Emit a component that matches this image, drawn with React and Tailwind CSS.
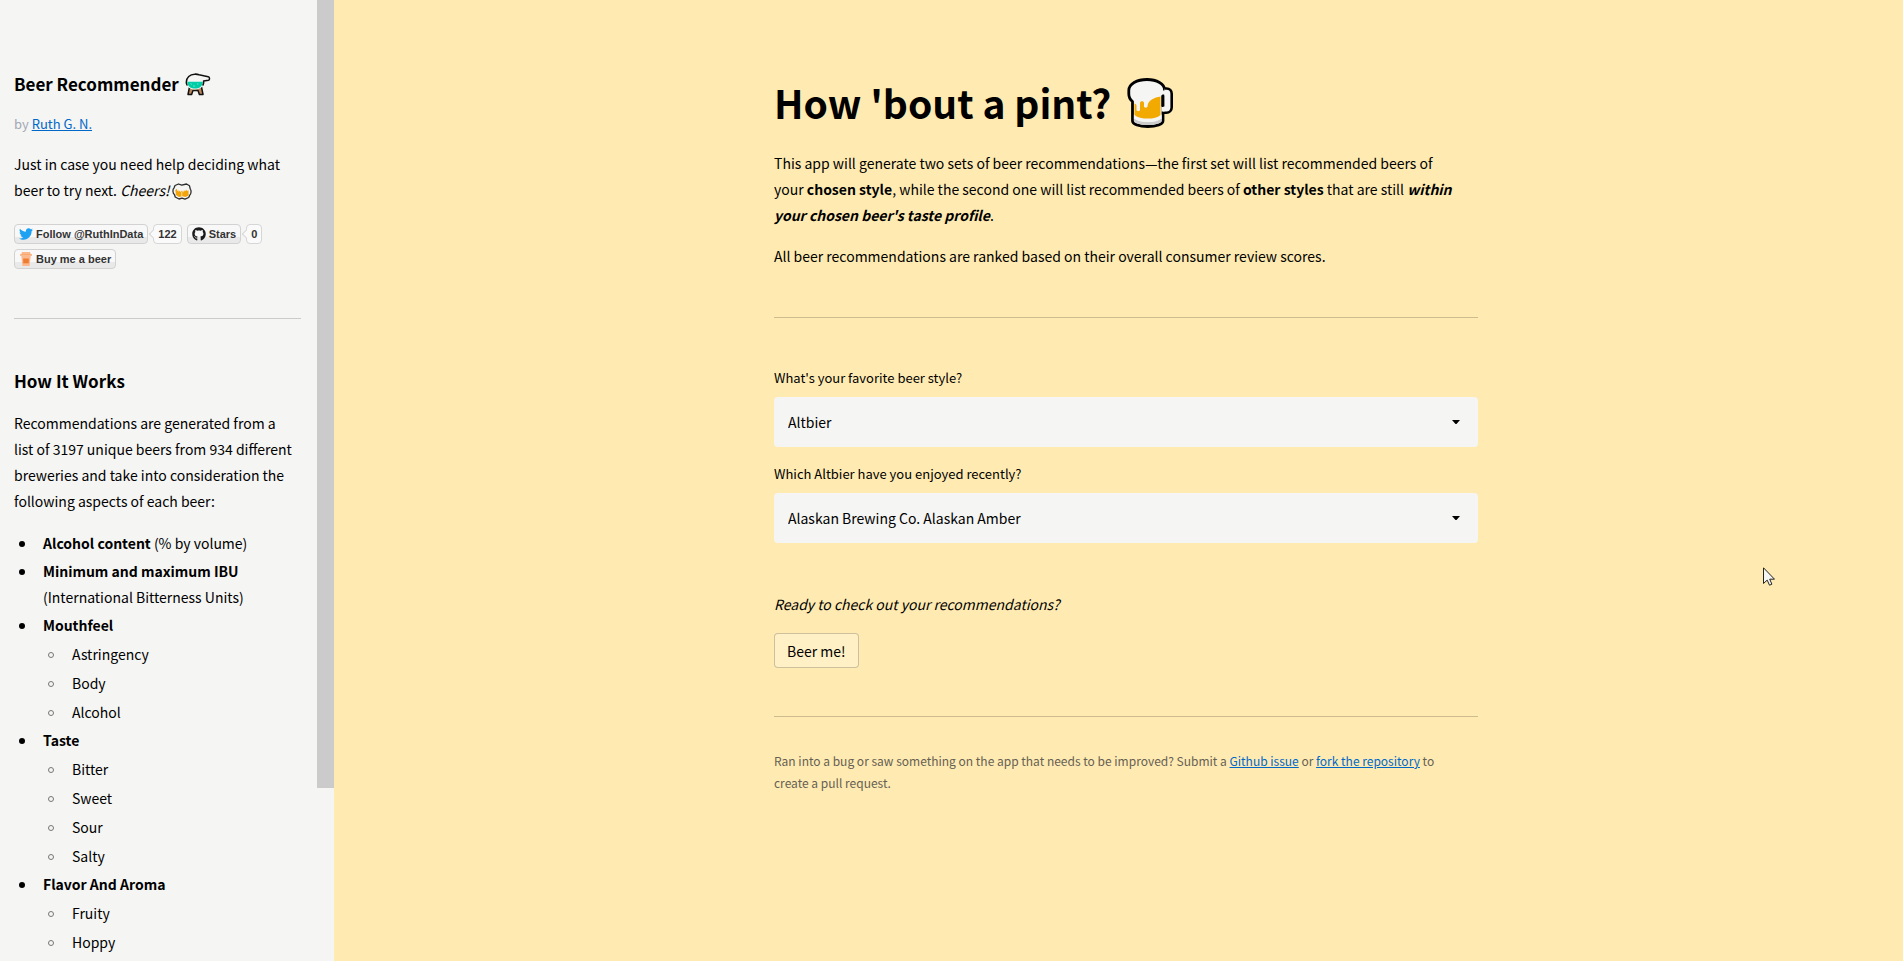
import { FaTwitter, FaGithub } from "react-icons/fa";

const groups = [
  { title: "Alcohol content", note: "(% by volume)" },
  { title: "Minimum and maximum IBU", note: "(International Bitterness Units)" },
  { title: "Mouthfeel", items: ["Astringency", "Body", "Alcohol"] },
  { title: "Taste", items: ["Bitter", "Sweet", "Sour", "Salty"] },
  { title: "Flavor And Aroma", items: ["Fruity", "Hoppy"] },
];

function Alembic() {
  return (
    <svg viewBox="0 0 26 23" className="h-[23px] w-[26px] shrink-0" aria-hidden="true">
      <path d="M4.500 14 3 21.500h3.600L8 17.500h5l1.400 4H18L16.500 14z" fill="#b98559" stroke="#111" strokeWidth="1.5" strokeLinejoin="round" />
      <path d="M9.500 1.200C11 1 12.500 1.200 14 1.800l9.200 2c1.700.4 1.800 3.200.2 3.500L18.600 8c.8 4.500-2.400 8.500-8.600 8.500-5.500 0-8.700-3-8.700-7.300C1.300 4.500 5 1.400 9.500 1.200z" fill="#f5f5f4" />
      <path d="M2.300 8.800h15.500c0 3.800-2.600 6.800-7.800 6.800S2.300 12.600 2.300 8.800z" fill="#00cca5" />
      <path d="M2 12C1.500 11 1.300 10.200 1.300 9.200 1.300 4.500 5 1.400 9.500 1.200 11 1 12.500 1.200 14 1.800l9.200 2c1.700.4 1.800 3.200.2 3.500L18.600 8c.3 1.500 0 3-.6 4" fill="none" stroke="#111" strokeWidth="1.500" strokeLinecap="round" strokeLinejoin="round" />
      <path d="M5.500 10.500 7 11.500M8 13h2M12 11h1.500" stroke="#7be8d2" strokeWidth=".8" />
    </svg>
  );
}

function Mugs() {
  return (
    <svg viewBox="0 0 20 17" className="ml-[2px] inline-block h-[17px] w-[20px] align-[-4px]" aria-hidden="true">
      <path d="M3 2.500 6.500 1l3.200 1.200L14.500 1l3 1.800.8 3.400c1.200.8 1 4.800-.6 6l-1 2.300-3.700 1.700-3-1-3 .8L3.200 14 2.500 11.500C.5 10.500.5 6 2 5z" fill="#f5f5f4" stroke="#2b2b2b" strokeWidth="1.300" strokeLinejoin="round" />
      <path d="M3.300 7 5 5.800V8l1.500-1v2L8 7.500V9l2-1.500 1.200 2 .8-2.500 1 1.500 1.200-2 .8 1.500 1.500-.8.200 5.300-3.200 1.500-3-.7-3.500.7L4 12z" fill="#f0a30a" />
      <path d="M9.800 8.500v5" stroke="#fff" strokeWidth=".6" />
    </svg>
  );
}

function Mug() {
  return (
    <svg viewBox="0 0 46 50" className="h-[50px] w-[46px] shrink-0" aria-hidden="true">
      <path d="M1.800 12.500C1.800 6 10 1.500 20 1.500S37.500 6 37.500 11.500v4L36 18v25c0 3-6.500 5.500-15.200 5.500S5.500 46 5.500 43V23.500C3 21.500 1.800 19 1.800 16z" fill="#f5f5f4" stroke="#000" strokeWidth="2.800" strokeLinejoin="round" />
      <path d="M6.900 40c3 2.800 8 4 14 4s10.900-1.200 13.800-4v3c0 2-6 4.100-13.800 4.100S6.900 45 6.900 43z" fill="#ccc" />
      <path d="M6.900 36.500c3 2.500 8 3.500 14 3.500s10.800-1 13.800-3.500V40.500c-3 2.500-8 3.500-13.800 3.500S9.900 43 6.900 40.500z" fill="#f5f5f4" />
      <path d="M7.500 25.500c1 .4 1.800 1 2 2V32c0 1.500 3.500 1.500 3.500 0v-7c0-2.500 4-2.500 4 0v3.500c0 1.500 3.500 1.500 3.500 0 .3-6.500 7-9 13-10V37c-3 2.600-7 3.600-12.500 3.600S10.500 39.600 7.500 37z" fill="#f2a900" />
      <path d="M37.500 10.500h2c3 0 5.200 2.200 5.200 5.200v13.500c0 3.200-2.200 5.500-5.400 5.500H36" fill="#f5f5f4" stroke="#000" strokeWidth="2.600" />
      <path d="M34.500 12.500h4v4h-4zM34.500 29h3v4.400h-3z" fill="#f5f5f4" />
      <path d="M34.400 17.500h3v11h-3z" fill="#000" />
    </svg>
  );
}

function BeerCup() {
  return (
    <svg viewBox="0 0 12 14" className="h-[14px] w-[12px]" aria-hidden="true">
      <path d="M2 0h8l.6 2.200H12v1.500H0V2.200h1.400z" fill="#f9a870" />
      <path d="M1.300 3.700h9.400L9.600 14H2.400z" fill="#fbb98d" />
      <path d="M3.200 6.500h5.600v4.800H3.200z" fill="#ee7d31" />
      <path d="M2.200 1h7.600" stroke="#fcd3b8" strokeWidth=".8" />
    </svg>
  );
}

const badge =
  "flex h-5 items-center gap-[3px] rounded-sm border border-[#d2d2d2] bg-linear-to-b from-[#f8f8f8] from-65% to-[#e9e9e9] to-65% px-1 hover:border-[#999]";

function Count({ children }) {
  return (
    <a href="#count" className="relative flex h-5 items-center rounded-sm border border-[#d6d6d6] bg-[#fafafa] px-1">
      <span className="absolute top-[6px] -left-[4px] size-[6px] rotate-45 border-b border-l border-[#d6d6d6] bg-[#fafafa]" />
      {children}
    </a>
  );
}

function Field({ id, label, value, options }) {
  return (
    <div>
      <label htmlFor={id} className="block text-[13px] leading-[22px]">
        {label}
      </label>
      <div className="relative mt-2">
        <select id={id} defaultValue={value} className="block h-[50px] w-full appearance-none rounded bg-[#f5f5f3] px-[14px] text-[14px] outline-none">
          {options.map((o) => (
            <option key={o}>{o}</option>
          ))}
        </select>
        <svg viewBox="0 0 8 4" className="pointer-events-none absolute top-[23px] right-[18px] h-[4px] w-[8px]" aria-hidden="true">
          <path d="M0 0h8L4.500 4h-1z" fill="#000" />
        </svg>
      </div>
    </div>
  );
}

const link = "text-[#0068c9] underline";

export default function App() {
  return (
    <div className="flex h-screen overflow-hidden bg-[#ffebb2] font-['Noto_Sans_CJK_SC','Noto_Sans',sans-serif] text-[14px] leading-[26px] text-black">
      <aside className="flex w-[334px] shrink-0 bg-[#f5f5f3]">
        <div className="min-w-0 flex-1 overflow-hidden pt-[70px] pr-4 pl-[14px]">
          <h2 className="flex items-center gap-[6px] text-[17px] leading-7 font-semibold">
            Beer Recommender <Alembic />
          </h2>
          <p className="mt-[15px] text-[13px] leading-[22px] text-[#a3a8b4]">
            by <a href="#author" className={link}>Ruth G. N.</a>
          </p>
          <p className="mt-4">
            Just in case you need help deciding what
            <br />
            beer to try next. <em>Cheers!</em>
            <Mugs />
          </p>
          <div className="mt-[21px] flex flex-wrap gap-[5px] font-['Liberation_Sans',Arial,sans-serif] text-[11px] leading-[14px] font-bold text-[#333]">
            <a href="#follow" className={badge}>
              <FaTwitter className="size-[14px] text-[#1da1f2]" /> Follow @RuthInData
            </a>
            <Count>122</Count>
            <a href="#stars" className={badge}>
              <FaGithub className="size-[14px] text-[#1b1b1b]" /> Stars
            </a>
            <Count>0</Count>
            <a href="#beer" className={badge}>
              <span className="flex w-[14px] justify-center"><BeerCup /></span> Buy me a beer
            </a>
          </div>
          <hr className="mt-[49px] border-[#cbcbc9]" />
          <h2 className="mt-[48px] text-[17px] leading-7 font-semibold">How It Works</h2>
          <p className="mt-[15px]">
            Recommendations are generated from a
            <br />
            list of 3197 unique beers from 934 different
            <br />
            breweries and take into consideration the
            <br />
            following aspects of each beer:
          </p>
          <ul className="mt-4 flex flex-col gap-[2px]">
            {groups.map((g) => (
              <li key={g.title} className="relative pl-[29px]">
                <span className="absolute top-[11px] left-[5px] size-[6px] rounded-full bg-black" />
                <strong>{g.title}</strong> {g.note}
                {g.items && (
                  <ul>
                    {g.items.map((i) => (
                      <li key={i} className="relative pt-[3px] pl-[29px]">
                        <span className="absolute top-[14px] left-[5px] size-[6px] rounded-full border border-[#777]" />
                        {i}
                      </li>
                    ))}
                  </ul>
                )}
              </li>
            ))}
          </ul>
        </div>
        <div className="w-[17px] shrink-0">
          <div className="h-[82%] bg-[#cbcbcb]" />
        </div>
      </aside>

      <main className="flex-1 overflow-hidden pt-[76px] pl-[15px]">
        <div className="mx-auto max-w-[704px]">
          <h1 className="flex items-center gap-4 text-[39px] leading-[53px] font-bold">
            How 'bout a pint? <Mug />
          </h1>
          <p className="mt-[21px]">
            This app will generate two sets of beer recommendations—the first set will list recommended beers of
            <br />
            your <strong>chosen style</strong>, while the second one will list recommended beers of <strong>other styles</strong> that are still{" "}
            <strong className="italic">
              within
              <br />
              your chosen beer's taste profile
            </strong>
            .
          </p>
          <p className="mt-[15px]">All beer recommendations are ranked based on their overall consumer review scores.</p>
          <hr className="mt-[48px] border-black/20" />
          <div className="mt-[49px] flex flex-col gap-4">
            <Field id="style" label="What's your favorite beer style?" value="Altbier" options={["Altbier", "Barleywine", "Bitter", "Bock"]} />
            <Field
              id="beer"
              label="Which Altbier have you enjoyed recently?"
              value="Alaskan Brewing Co. Alaskan Amber"
              options={["Alaskan Brewing Co. Alaskan Amber", "Ninkasi Brewing Company Sleigh'r"]}
            />
          </div>
          <p className="mt-[48px] italic">Ready to check out your recommendations?</p>
          <button type="button" className="mt-4 block h-[35px] rounded border border-black/20 bg-[#fff0c5] px-3">
            Beer me!
          </button>
          <hr className="mt-[48px] border-black/20" />
          <p className="mt-[33px] text-[12px] leading-[22px] text-[#666052]">
            Ran into a bug or saw something on the app that needs to be improved? Submit a{" "}
            <a href="#issue" className={link}>Github issue</a> or <a href="#fork" className={link}>fork the repository</a> to
            <br />
            create a pull request.
          </p>
        </div>
      </main>

      <svg viewBox="0 0 12 19" className="pointer-events-none fixed top-[567px] left-[1763px] h-[19px] w-[12px]" aria-hidden="true">
        <path d="M.5.800v15.700l3.700-3.400 2.300 5.100 2.400-1-2.200-5h4.800z" fill="#f5f5f3" stroke="#222" strokeWidth="1" />
      </svg>
    </div>
  );
}
